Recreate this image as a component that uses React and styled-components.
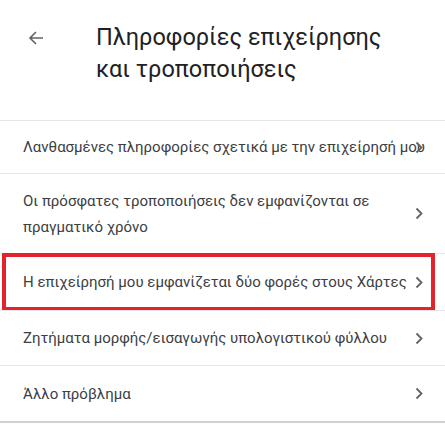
import React from "react";
import styled, { createGlobalStyle } from "styled-components";

const Global = createGlobalStyle`
  html, body { margin: 0; padding: 0; background: #ffffff; }
  body { font-family: Roboto, "Noto Sans", "Liberation Sans", sans-serif; }
`;

const Page = styled.div`
  width: 445px;
  height: 424px;
  overflow: hidden;
  background: #fff;
`;

const Header = styled.header`
  display: flex;
  align-items: flex-start;
  padding: 21px 0 0 28px;
  height: 96px;
  box-sizing: border-box;
`;

const BackButton = styled.button`
  border: 0;
  background: none;
  padding: 0;
  width: 16px;
  height: 33px;
  display: flex;
  align-items: center;
  justify-content: center;
  color: #5f6368;
  margin-right: 52px;
  cursor: pointer;
`;

const Title = styled.h1`
  margin: 0;
  font-weight: 400;
  font-size: 23.5px;
  line-height: 32px;
  color: #202124;
`;

const List = styled.ul`
  list-style: none;
  margin: 0;
  padding: 0;
  border-bottom: 2px solid #d0d0d0;
`;

const Row = styled.li`
  position: relative;
  display: flex;
  align-items: center;
  min-height: ${(p) => p.$h}px;
  padding: 0 22px 0 23px;
  box-sizing: border-box;
  border-top: ${(p) => (p.$first ? "0" : "1px solid #e6e6e6")};
`;

const Label = styled.span`
  flex: 1;
  min-width: 0;
  font-size: 15px;
  line-height: 26px;
  color: #3c4043;
  white-space: ${(p) => (p.$wrap ? "normal" : "nowrap")};
  padding-right: ${(p) => (p.$wrap ? "40px" : "0")};
`;

const Chevron = styled.span`
  flex: none;
  width: 8px;
  display: flex;
  color: #5f6368;
  margin-left: 4px;
`;

const Highlight = styled.span`
  position: absolute;
  left: 2px;
  right: 10px;
  top: -1px;
  bottom: -1px;
  border: 4px solid #e3232c;
  pointer-events: none;
`;

const Arrow = () => (
  <svg width="16" height="16" viewBox="0 0 16 16" fill="none">
    <path d="M15 8H2M8 2L2 8l6 6" stroke="currentColor" strokeWidth="1.6" />
  </svg>
);

const ChevronIcon = () => (
  <svg width="8" height="13" viewBox="0 0 8 13" fill="none">
    <path d="M1.5 1.5l5 5-5 5" stroke="currentColor" strokeWidth="1.8" />
  </svg>
);

const items = [
  { text: "Λανθασμένες πληροφορίες σχετικά με την επιχείρησή μου", h: 53 },
  { text: "Οι πρόσφατες τροποποιήσεις δεν εμφανίζονται σε πραγματικό χρόνο", h: 80, wrap: true },
  { text: "Η επιχείρησή μου εμφανίζεται δύο φορές στους Χάρτες", h: 57, hl: true },
  { text: "Ζητήματα μορφής/εισαγωγής υπολογιστικού φύλλου", h: 55 },
  { text: "Άλλο πρόβλημα", h: 56 },
];

export default function App() {
  return (
    <Page>
      <Global />
      <Header>
        <BackButton aria-label="Πίσω">
          <Arrow />
        </BackButton>
        <Title>
          Πληροφορίες επιχείρησης
          <br />
          και τροποποιήσεις
        </Title>
      </Header>
      <List>
        <Row $h={24} $first />
        {items.map((it) => (
          <Row key={it.text} $h={it.h}>
            <Label $wrap={it.wrap}>{it.text}</Label>
            <Chevron>
              <ChevronIcon />
            </Chevron>
            {it.hl && <Highlight />}
          </Row>
        ))}
      </List>
    </Page>
  );
}
